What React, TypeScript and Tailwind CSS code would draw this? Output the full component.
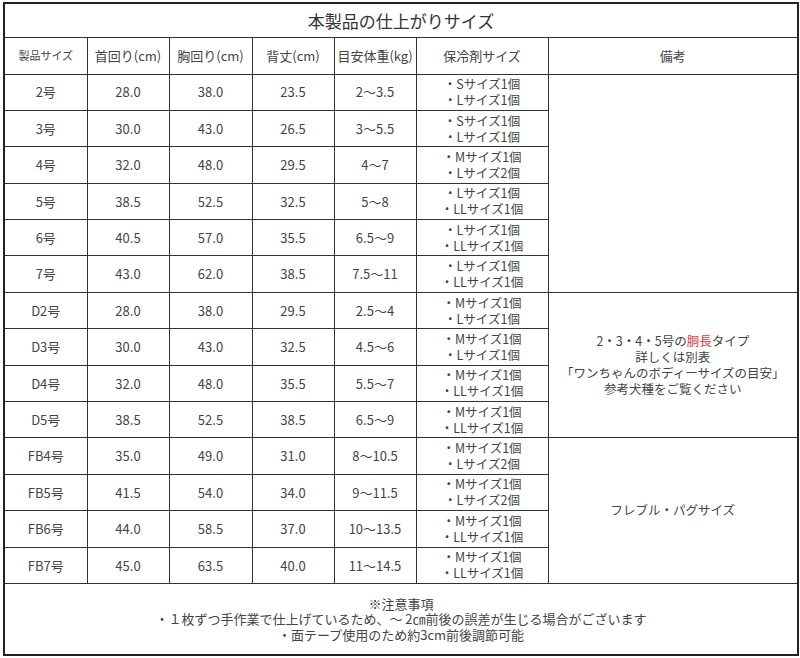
import React from 'react';

type Row = {
  size: string;
  neck: string;
  chest: string;
  back: string;
  weight: string;
  packs: [string, string];
};

const rows: Row[] = [
  { size: '2号', neck: '28.0', chest: '38.0', back: '23.5', weight: '2～3.5', packs: ['・Sサイズ1個', '・Lサイズ1個'] },
  { size: '3号', neck: '30.0', chest: '43.0', back: '26.5', weight: '3～5.5', packs: ['・Sサイズ1個', '・Lサイズ1個'] },
  { size: '4号', neck: '32.0', chest: '48.0', back: '29.5', weight: '4～7', packs: ['・Mサイズ1個', '・Lサイズ2個'] },
  { size: '5号', neck: '38.5', chest: '52.5', back: '32.5', weight: '5～8', packs: ['・Lサイズ1個', '・LLサイズ1個'] },
  { size: '6号', neck: '40.5', chest: '57.0', back: '35.5', weight: '6.5～9', packs: ['・Lサイズ1個', '・LLサイズ1個'] },
  { size: '7号', neck: '43.0', chest: '62.0', back: '38.5', weight: '7.5～11', packs: ['・Lサイズ1個', '・LLサイズ1個'] },
  { size: 'D2号', neck: '28.0', chest: '38.0', back: '29.5', weight: '2.5～4', packs: ['・Mサイズ1個', '・Lサイズ1個'] },
  { size: 'D3号', neck: '30.0', chest: '43.0', back: '32.5', weight: '4.5～6', packs: ['・Mサイズ1個', '・Lサイズ1個'] },
  { size: 'D4号', neck: '32.0', chest: '48.0', back: '35.5', weight: '5.5～7', packs: ['・Mサイズ1個', '・LLサイズ1個'] },
  { size: 'D5号', neck: '38.5', chest: '52.5', back: '38.5', weight: '6.5～9', packs: ['・Mサイズ1個', '・LLサイズ1個'] },
  { size: 'FB4号', neck: '35.0', chest: '49.0', back: '31.0', weight: '8～10.5', packs: ['・Mサイズ1個', '・Lサイズ2個'] },
  { size: 'FB5号', neck: '41.5', chest: '54.0', back: '34.0', weight: '9～11.5', packs: ['・Mサイズ1個', '・Lサイズ2個'] },
  { size: 'FB6号', neck: '44.0', chest: '58.5', back: '37.0', weight: '10～13.5', packs: ['・Mサイズ1個', '・LLサイズ1個'] },
  { size: 'FB7号', neck: '45.0', chest: '63.5', back: '40.0', weight: '11～14.5', packs: ['・Mサイズ1個', '・LLサイズ1個'] },
];

const cell = 'border border-[#333] text-center align-middle p-0';

function Remarks({ index }: { index: number }) {
  // merged note cells: 2-7号 blank, D series, FB series
  if (index === 0) {
    return <td rowSpan={6} className={cell} />;
  }
  if (index === 6) {
    return (
      <td rowSpan={4} className={`${cell} text-[12.5px] leading-[16px]`}>
        <div>
          2・3・4・5号の<span className="text-[#e0393e]">胴長</span>タイプ
        </div>
        <div>詳しくは別表</div>
        <div>「ワンちゃんのボディーサイズの目安」</div>
        <div>参考犬種をご覧ください</div>
      </td>
    );
  }
  if (index === 10) {
    return (
      <td rowSpan={4} className={`${cell} text-[12.5px]`}>
        フレブル・パグサイズ
      </td>
    );
  }
  return null;
}

export default function App() {
  return (
    <div className="min-h-[658px] w-[800px] bg-white pl-[3px] pt-[2px] font-['Noto_Sans_CJK_JP',sans-serif] text-[#444]">
      <table className="w-[794px] table-fixed border-collapse border-2 border-[#222]">
        <colgroup>
          <col className="w-[83px]" />
          <col className="w-[82px]" />
          <col className="w-[83px]" />
          <col className="w-[82px]" />
          <col className="w-[82px]" />
          <col className="w-[132px]" />
          <col className="w-[250px]" />
        </colgroup>
        <tbody>
          <tr className="h-[34px]">
            <td colSpan={7} className={`${cell} text-[17px] text-[#333]`}>
              本製品の仕上がりサイズ
            </td>
          </tr>
          <tr className="h-[37px] text-[13px]">
            <td className={`${cell} text-[11px]`}>製品サイズ</td>
            <td className={cell}>首回り(cm)</td>
            <td className={cell}>胸回り(cm)</td>
            <td className={cell}>背丈(cm)</td>
            <td className={cell}>目安体重(kg)</td>
            <td className={cell}>保冷剤サイズ</td>
            <td className={cell}>備考</td>
          </tr>
          {rows.map((r, i) => (
            <tr key={r.size} className="h-[36.4px] text-[13px]">
              <td className={cell}>{r.size}</td>
              <td className={cell}>{r.neck}</td>
              <td className={cell}>{r.chest}</td>
              <td className={cell}>{r.back}</td>
              <td className={cell}>{r.weight}</td>
              <td className={`${cell} text-[12.5px] leading-[16px]`}>
                <div>{r.packs[0]}</div>
                <div>{r.packs[1]}</div>
              </td>
              <Remarks index={i} />
            </tr>
          ))}
          <tr className="h-[72px]">
            <td colSpan={7} className={`${cell} text-[13px] leading-[15.5px]`}>
              <div>※注意事項</div>
              <div>・１枚ずつ手作業で仕上げているため、～ 2㎝前後の誤差が生じる場合がございます</div>
              <div>・面テープ使用のため約3cm前後調節可能</div>
            </td>
          </tr>
        </tbody>
      </table>
    </div>
  );
}
